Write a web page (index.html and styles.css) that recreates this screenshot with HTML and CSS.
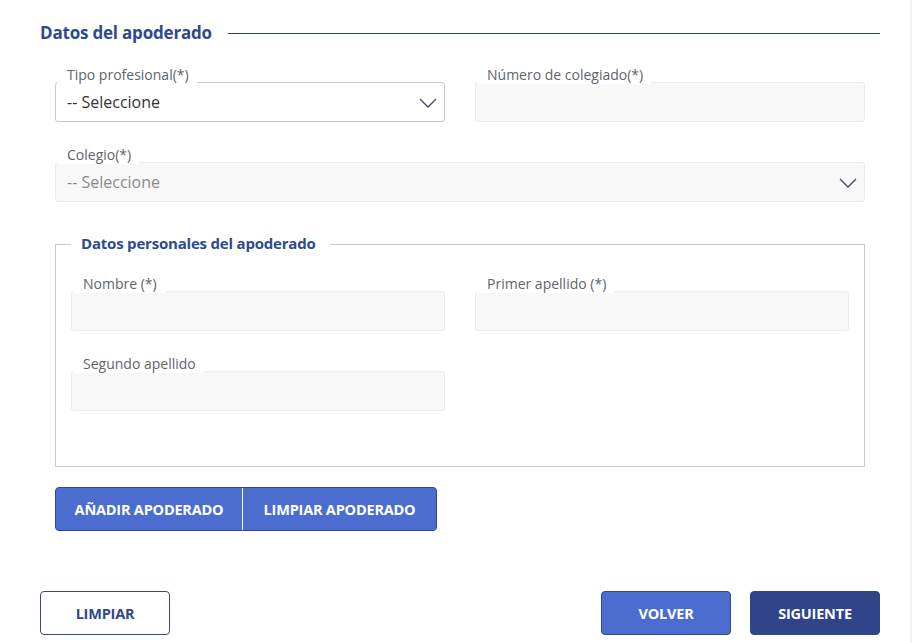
FILE: index.html
```html
<!DOCTYPE html>
<html lang="es">
<head>
    <meta charset="UTF-8">
    <meta name="viewport" content="width=device-width, initial-scale=1.0">
    <title>Datos del apoderado</title>
    <link rel="stylesheet" href="styles.css">
</head>
<body>
    <div class="page">
        <div class="section-title">
            <h2>Datos del apoderado</h2>
            <span class="rule"></span>
        </div>

        <div class="form">
            <div class="row">
                <div class="field">
                    <label>Tipo profesional(*)</label>
                    <div class="select">
                        <span>-- Seleccione</span>
                        <svg class="chevron" width="18" height="10" viewBox="0 0 18 10"><polyline points="1,1 9,9 17,1" fill="none" stroke="#3a4a6a" stroke-width="1.3"/></svg>
                    </div>
                </div>
                <div class="field">
                    <label>Número de colegiado(*)</label>
                    <div class="input disabled"></div>
                </div>
            </div>

            <div class="row single">
                <div class="field">
                    <label>Colegio(*)</label>
                    <div class="select disabled">
                        <span>-- Seleccione</span>
                        <svg class="chevron" width="18" height="10" viewBox="0 0 18 10"><polyline points="1,1 9,9 17,1" fill="none" stroke="#3a4a6a" stroke-width="1.3"/></svg>
                    </div>
                </div>
            </div>

            <div class="group">
                <div class="group-title">Datos personales del apoderado</div>
                <div class="row inner">
                    <div class="field">
                        <label>Nombre (*)</label>
                        <div class="input disabled"></div>
                    </div>
                    <div class="field">
                        <label>Primer apellido (*)</label>
                        <div class="input disabled"></div>
                    </div>
                    <div class="field">
                        <label>Segundo apellido</label>
                        <div class="input disabled"></div>
                    </div>
                </div>
            </div>

            <div class="btn-group">
                <button class="btn-add">AÑADIR APODERADO</button>
                <button class="btn-clear">LIMPIAR APODERADO</button>
            </div>
        </div>

        <div class="actions">
            <button class="btn outline">LIMPIAR</button>
            <div class="actions-right">
                <button class="btn primary">VOLVER</button>
                <button class="btn dark">SIGUIENTE</button>
            </div>
        </div>
    </div>
</body>
</html>
```

FILE: styles.css
```css
* {
    margin: 0;
    padding: 0;
    box-sizing: border-box;
    font-family: 'Open Sans', 'Noto Sans', sans-serif;
}

body {
    background: #fff;
    box-shadow: inset -2px 0 0 #f1f1f1;
    min-height: 100vh;
}

.page {
    padding: 21px 32px 0 40px;
}

.section-title {
    display: flex;
    align-items: center;
    gap: 16px;
}

.section-title h2 {
    font-size: 17px;
    line-height: 24px;
    font-weight: 700;
    color: #2e4a8f;
    letter-spacing: -0.2px;
}

.rule {
    flex: 1;
    height: 1px;
    background: #2e3e6e;
}

.form {
    padding: 21px 15px 0 15px;
}

.row {
    display: grid;
    grid-template-columns: 1fr 1fr;
    column-gap: 30px;
    row-gap: 24px;
}

.row.single {
    grid-template-columns: 1fr;
    margin-top: 24px;
}

.field label {
    display: block;
    width: fit-content;
    position: relative;
    font-size: 14px;
    line-height: 18px;
    color: #60646b;
    background: #fff;
    padding: 0 8px 0 10px;
    margin-left: 2px;
    margin-bottom: -2px;
}

.select,
.input {
    height: 40px;
    border: 1px solid #c9c9c9;
    border-radius: 3px;
    display: flex;
    align-items: center;
    justify-content: space-between;
    padding: 0 7px 0 11px;
    font-size: 16px;
    color: #333;
}

.disabled {
    background: #f8f8f8;
    border-color: #ececec;
}

.select.disabled span {
    color: #8a8a8a;
}

.chevron {
    margin-top: 1px;
}

.group {
    margin-top: 42px;
    border: 1px solid #c9c9c9;
    padding: 0 15px 55px;
}

.group-title {
    width: fit-content;
    margin-top: -12px;
    background: #fff;
    padding: 0 14px 0 10px;
    font-size: 15px;
    line-height: 20px;
    font-weight: 700;
    color: #2e4a8f;
    letter-spacing: -0.2px;
}

.row.inner {
    margin-top: 22px;
}

.btn-group {
    display: flex;
    width: fit-content;
    margin-top: 20px;
    border: 1px solid #2f4a8a;
    border-radius: 4px;
    overflow: hidden;
    background: #4a6dcf;
}

.btn-group button {
    height: 42px;
    border: none;
    background: #4a6dcf;
    color: #fff;
    font-size: 14.5px;
    font-weight: 700;
    letter-spacing: -0.2px;
}

.btn-add {
    width: 187px;
    border-right: 1px solid #fff !important;
}

.btn-clear {
    width: 193px;
}

.actions {
    display: flex;
    justify-content: space-between;
    margin-top: 60px;
}

.actions-right {
    display: flex;
    gap: 19px;
}

.btn {
    width: 130px;
    height: 44px;
    border-radius: 4px;
    font-size: 14.5px;
    font-weight: 700;
    letter-spacing: -0.2px;
    cursor: pointer;
}

.btn.outline {
    background: #fff;
    border: 1px solid #2f4a8a;
    color: #2f4a8a;
}

.btn.primary {
    background: #4a6dcf;
    border: 1px solid #2f4a8a;
    color: #fff;
}

.btn.dark {
    background: #2f4489;
    border: 1px solid #2f4489;
    color: #fff;
}
```
